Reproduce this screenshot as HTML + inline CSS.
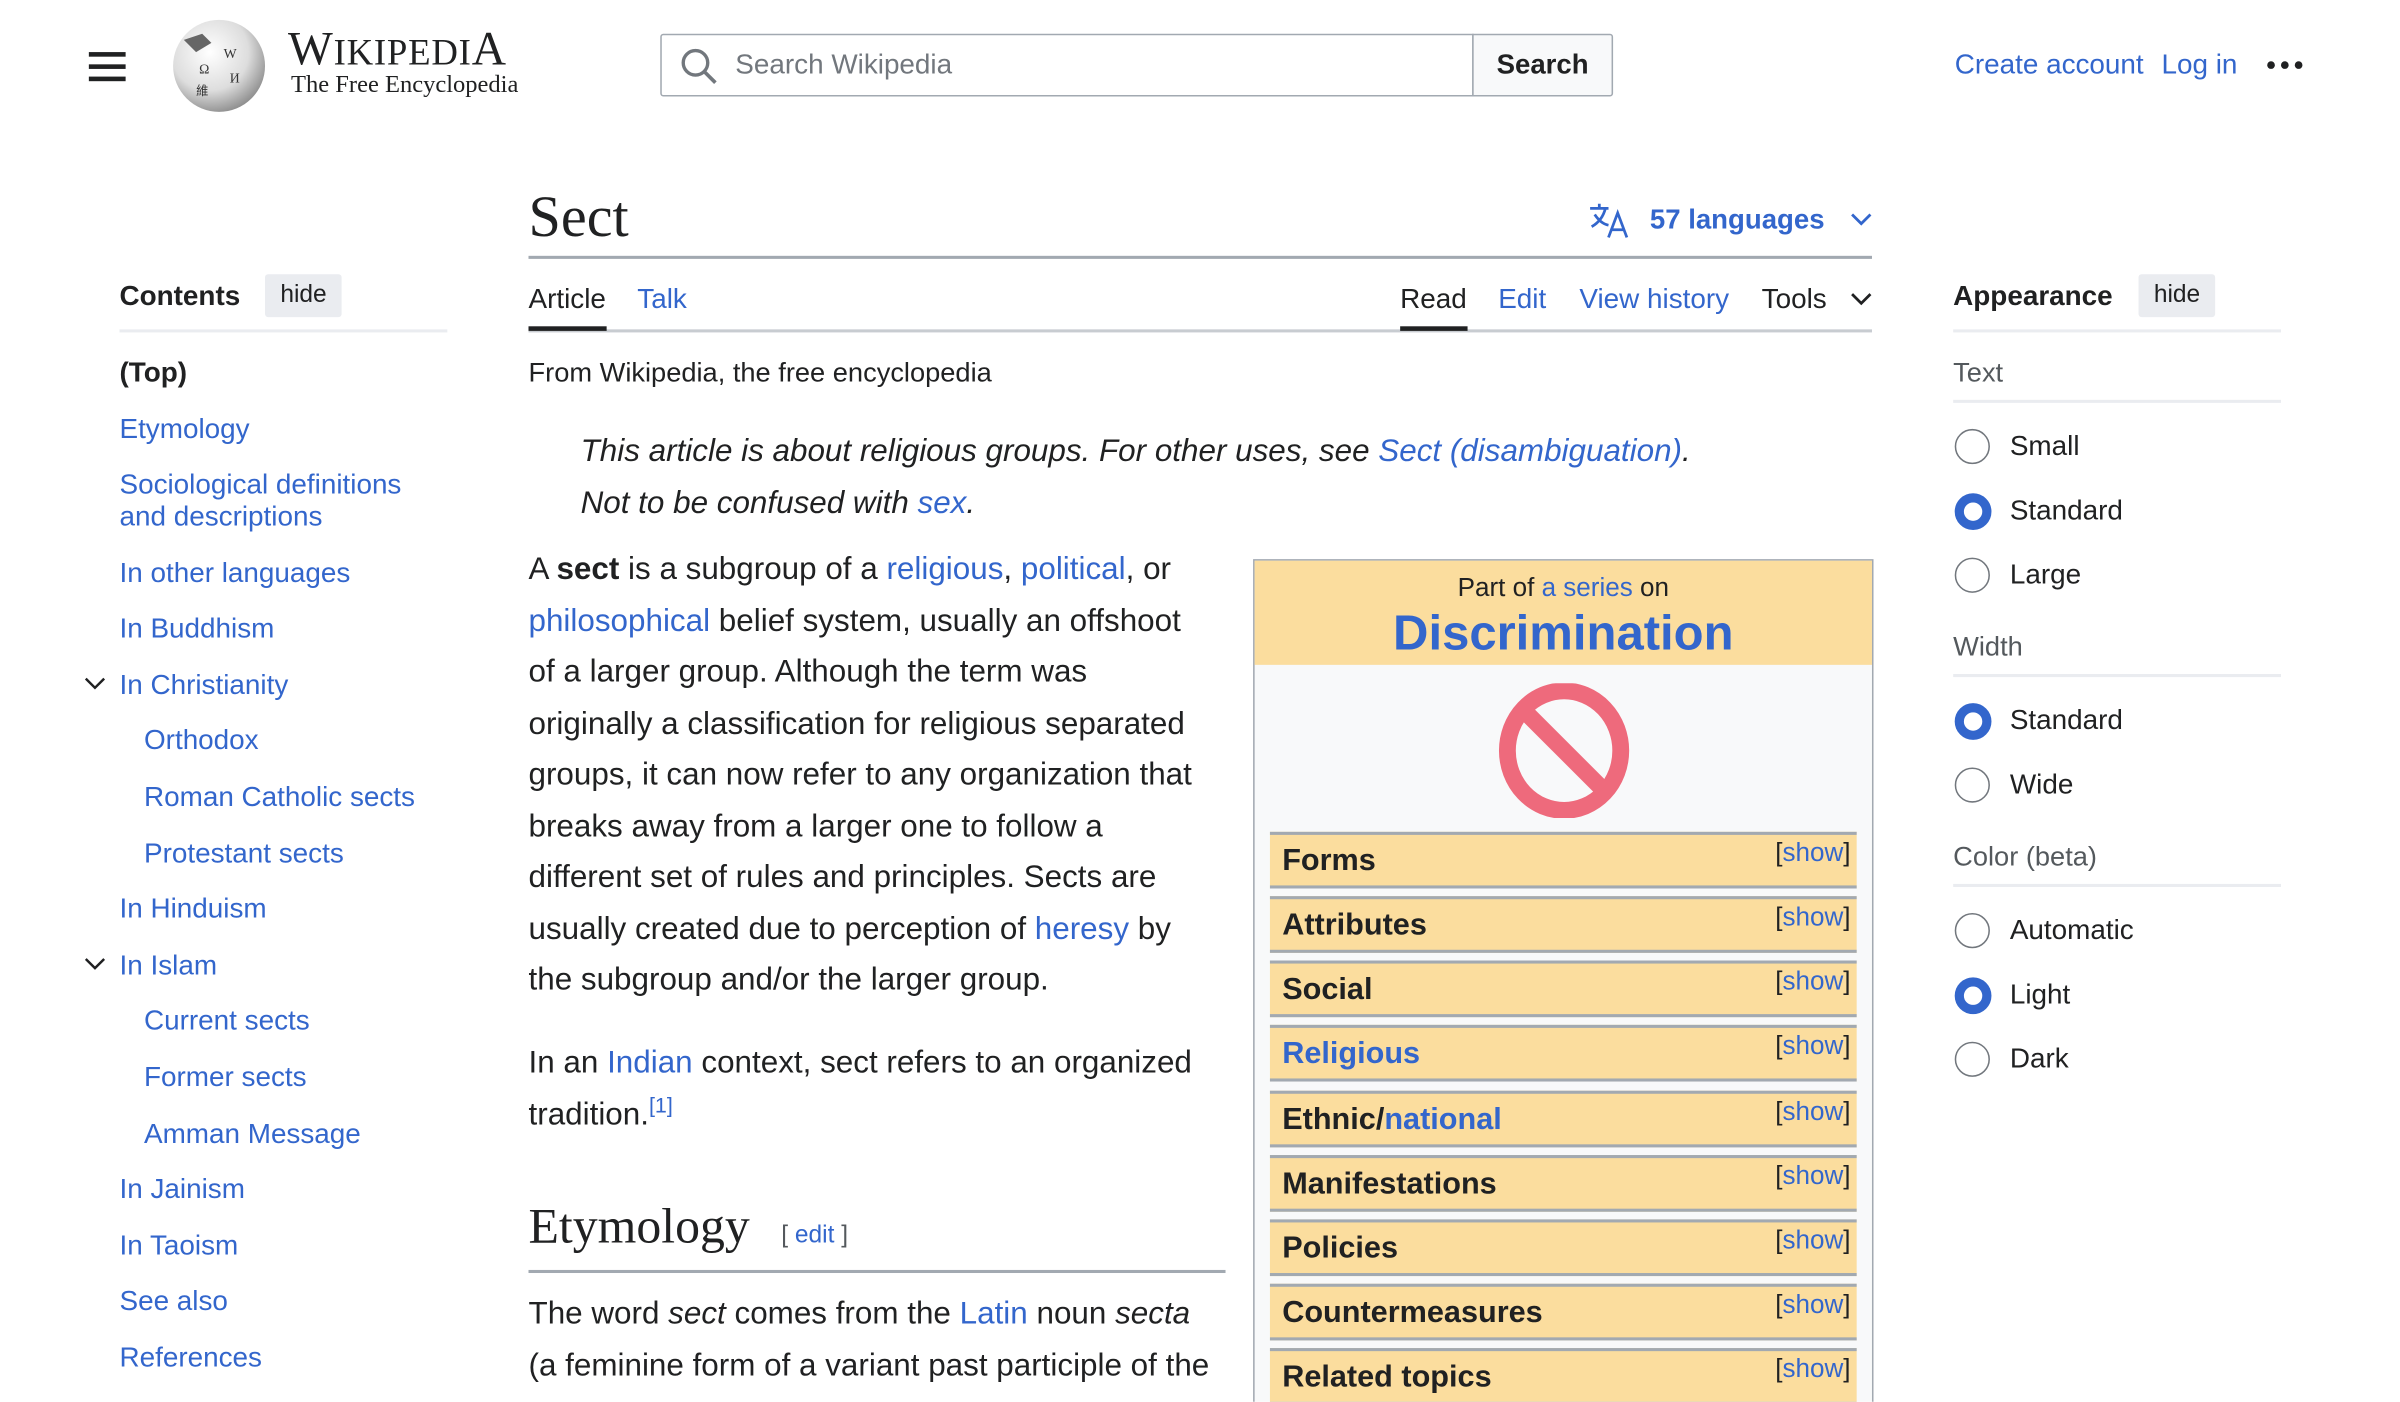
<!DOCTYPE html>
<html><head><meta charset="utf-8">
<style>
html,body{margin:0;padding:0;background:#fff;width:2400px;height:1398px;overflow:hidden;}
#w{position:absolute;left:0;top:0;width:1570px;height:915px;transform:scale(1.5319);transform-origin:0 0;font-family:"Liberation Sans",Arial,sans-serif;color:#202122;overflow:hidden;}
.a{position:absolute;white-space:nowrap;}
a,.l{color:#3366cc;text-decoration:none;}
.serif{font-family:"Liberation Serif","Times New Roman",serif;}
.toc div{position:absolute;left:0;font-size:18.2px;color:#3366cc;white-space:nowrap;}
.p{font-size:20.5px;line-height:33.5px;}
.row{position:absolute;left:10px;width:383px;height:33px;background:#fbdd9e;border-top:2px solid #a2a9b1;border-bottom:2px solid #a2a9b1;}
.row b{position:absolute;left:8px;top:6px;font-size:20px;}
.row span{position:absolute;right:4px;top:2px;font-size:17px;}
.radio{position:absolute;left:0;width:21px;height:21px;border:1.5px solid #72777d;border-radius:50%;}
.radio.on{border:6px solid #3366cc;width:12px;height:12px;background:#fff;}
.rl{position:absolute;left:36px;font-size:18.2px;}
.hidebtn{position:absolute;background:#eaecf0;border-radius:2px;font-size:16px;padding:0 10px;height:28px;line-height:28px;}
</style></head><body><div id="w">
<!-- header -->
<div class="a" style="left:58px;top:34px;width:24px;height:3px;background:#202122;"></div>
<div class="a" style="left:58px;top:42px;width:24px;height:3px;background:#202122;"></div>
<div class="a" style="left:58px;top:50px;width:24px;height:3px;background:#202122;"></div>
<svg class="a" style="left:110px;top:12px" width="66" height="62" viewBox="0 0 66 62">
<defs><radialGradient id="g" cx="40%" cy="35%" r="70%"><stop offset="0" stop-color="#fff"/><stop offset="0.6" stop-color="#ddd"/><stop offset="1" stop-color="#888"/></radialGradient></defs>
<ellipse cx="33" cy="31" rx="30" ry="30" fill="url(#g)"/>
<path d="M10 14 L22 10 L28 16 L18 22 Z" fill="#666"/>
<text x="20" y="36" font-size="9" font-family="Liberation Serif" fill="#333">Ω</text>
<text x="36" y="26" font-size="9" font-family="Liberation Serif" fill="#333">W</text>
<text x="40" y="42" font-size="9" font-family="Liberation Serif" fill="#333">И</text>
<text x="18" y="50" font-size="8" font-family="Noto Sans CJK SC" fill="#333">維</text>
</svg>
<div class="a serif" style="left:188px;top:14px;font-size:31px;letter-spacing:0.5px;">W<span style="font-size:24px">IKIPEDI</span>A</div>
<div class="a serif" style="left:190px;top:47px;font-size:16px;">The Free Encyclopedia</div>
<div class="a" style="left:431px;top:22px;width:529px;height:39px;border:1px solid #a2a9b1;border-radius:2px 0 0 2px;"></div>
<svg class="a" style="left:443px;top:30px" width="26" height="26" viewBox="0 0 26 26"><circle cx="11" cy="11" r="8" fill="none" stroke="#72777d" stroke-width="2.2"/><path d="M17 17 L24 24" stroke="#72777d" stroke-width="2.4"/></svg>
<div class="a" style="left:480px;top:32px;font-size:18.2px;color:#72777d;">Search Wikipedia</div>
<div class="a" style="left:961px;top:22px;width:90px;height:39px;border:1px solid #a2a9b1;background:#f8f9fa;border-radius:0 2px 2px 0;font-weight:bold;font-size:18px;text-align:center;line-height:39px;">Search</div>
<div class="a l" style="left:1276px;top:32px;font-size:18.2px;">Create account</div>
<div class="a l" style="left:1411px;top:32px;font-size:18.2px;">Log in</div>
<div class="a" style="left:1480px;top:40px;width:5px;height:5px;border-radius:50%;background:#202122;box-shadow:9px 0 #202122,18px 0 #202122;"></div>

<!-- title -->
<div class="a serif" style="left:345px;top:120px;font-size:38px;">Sect</div>
<svg class="a" style="left:1037px;top:132px" width="28" height="24" viewBox="0 0 28 24"><g fill="none" stroke="#3366cc" stroke-width="1.8"><path d="M1 4 H13 M7 1 V4 M11 4 Q9 12 2 16 M4 8 Q8 14 13 15"/><path d="M13 23 L19 7 L25 23 M15 18 H23"/></g></svg>
<div class="a l" style="left:1077px;top:133px;font-size:18px;font-weight:bold;">57 languages</div>
<svg class="a" style="left:1208px;top:138px" width="14" height="10"><path d="M1 2 L7 8 L13 2" fill="none" stroke="#3366cc" stroke-width="1.8"/></svg>
<div class="a" style="left:345px;top:167px;width:877px;height:1.5px;background:#a2a9b1;"></div>
<div class="a" style="left:345px;top:185px;font-size:18.2px;">Article</div>
<div class="a l" style="left:416px;top:185px;font-size:18.2px;">Talk</div>
<div class="a" style="left:914px;top:185px;font-size:18.2px;">Read</div>
<div class="a l" style="left:978px;top:185px;font-size:18.2px;">Edit</div>
<div class="a l" style="left:1031px;top:185px;font-size:18.2px;">View history</div>
<div class="a" style="left:1150px;top:185px;font-size:18.2px;">Tools</div>
<svg class="a" style="left:1208px;top:190px" width="14" height="10"><path d="M1 2 L7 8 L13 2" fill="none" stroke="#202122" stroke-width="1.8"/></svg>
<div class="a" style="left:345px;top:215px;width:877px;height:1.5px;background:#c8ccd1;"></div>
<div class="a" style="left:345px;top:213px;width:51px;height:3px;background:#202122;"></div>
<div class="a" style="left:914px;top:213px;width:44px;height:3px;background:#202122;"></div>

<!-- TOC -->
<div class="a" style="left:78px;top:183px;font-size:18.2px;font-weight:bold;">Contents</div>
<div class="hidebtn" style="left:173px;top:179px;">hide</div>
<div class="a" style="left:78px;top:215px;width:214px;height:1.5px;background:#eaecf0;"></div>
<div class="toc a" style="left:78px;top:0;">
<div style="top:233px;color:#202122;font-weight:bold;">(Top)</div>
<div style="top:270px;">Etymology</div>
<div style="top:306px;line-height:21px;">Sociological definitions<br>and descriptions</div>
<div style="top:364px;">In other languages</div>
<div style="top:400px;">In Buddhism</div>
<div style="top:437px;">In Christianity</div>
<div style="top:473px;left:16px;">Orthodox</div>
<div style="top:510px;left:16px;">Roman Catholic sects</div>
<div style="top:547px;left:16px;">Protestant sects</div>
<div style="top:583px;">In Hinduism</div>
<div style="top:620px;">In Islam</div>
<div style="top:656px;left:16px;">Current sects</div>
<div style="top:693px;left:16px;">Former sects</div>
<div style="top:730px;left:16px;">Amman Message</div>
<div style="top:766px;">In Jainism</div>
<div style="top:803px;">In Taoism</div>
<div style="top:839px;">See also</div>
<div style="top:876px;">References</div>
</div>
<svg class="a" style="left:55px;top:441px" width="14" height="10"><path d="M1 2 L7 8 L13 2" fill="none" stroke="#202122" stroke-width="1.6"/></svg>
<svg class="a" style="left:55px;top:624px" width="14" height="10"><path d="M1 2 L7 8 L13 2" fill="none" stroke="#202122" stroke-width="1.6"/></svg>

<!-- content -->
<div class="a" style="left:345px;top:233px;font-size:17.8px;">From Wikipedia, the free encyclopedia</div>
<div class="a p" style="left:379px;top:278px;font-style:italic;">This article is about religious groups. For other uses, see <a>Sect (disambiguation)</a>.<br>Not to be confused with <a>sex</a>.</div>
<div class="a p" style="left:345px;top:355px;">A <b>sect</b> is a subgroup of a <a>religious</a>, <a>political</a>, or<br><a>philosophical</a> belief system, usually an offshoot<br>of a larger group. Although the term was<br>originally a classification for religious separated<br>groups, it can now refer to any organization that<br>breaks away from a larger one to follow a<br>different set of rules and principles. Sects are<br>usually created due to perception of <a>heresy</a> by<br>the subgroup and/or the larger group.</div>
<div class="a p" style="left:345px;top:677px;">In an <a>Indian</a> context, sect refers to an organized<br>tradition.<sup style="font-size:14px;line-height:0;"><a>[1]</a></sup></div>
<div class="a serif" style="left:345px;top:783px;font-size:32.5px;">Etymology</div>
<div class="a" style="left:510px;top:798px;font-size:16px;color:#54595d;">[ <a>edit</a> ]</div>
<div class="a" style="left:345px;top:829px;width:455px;height:1.5px;background:#a2a9b1;"></div>
<div class="a p" style="left:345px;top:841px;">The word <i>sect</i> comes from the <a>Latin</a> noun <i>secta</i><br>(a feminine form of a variant past participle of the</div>

<!-- infobox -->
<div class="a" style="left:818px;top:365px;width:403px;height:560px;border:1px solid #a2a9b1;background:#f8f9fa;">
<div style="position:absolute;left:0;top:0;width:403px;height:68px;background:#fbdd9e;"></div>
<div style="position:absolute;left:0;top:8px;width:403px;text-align:center;font-size:17px;">Part of <a>a series</a> on</div>
<div style="position:absolute;left:0;top:29px;width:403px;text-align:center;font-size:32px;font-weight:bold;color:#3366cc;">Discrimination</div>
<svg style="position:absolute;left:158px;top:80px" width="88" height="88" viewBox="0 0 88 88"><ellipse cx="44" cy="44" rx="37" ry="39" fill="none" stroke="#ee6a7c" stroke-width="11"/><path d="M19 19 L69 69" stroke="#ee6a7c" stroke-width="11"/></svg>
<div class="row" style="top:177px;"><b>Forms</b><span>[<a>show</a>]</span></div>
<div class="row" style="top:219px;"><b>Attributes</b><span>[<a>show</a>]</span></div>
<div class="row" style="top:261px;"><b>Social</b><span>[<a>show</a>]</span></div>
<div class="row" style="top:303px;"><b style="color:#3366cc">Religious</b><span>[<a>show</a>]</span></div>
<div class="row" style="top:346px;"><b>Ethnic/<a>national</a></b><span>[<a>show</a>]</span></div>
<div class="row" style="top:388px;"><b>Manifestations</b><span>[<a>show</a>]</span></div>
<div class="row" style="top:430px;"><b>Policies</b><span>[<a>show</a>]</span></div>
<div class="row" style="top:472px;"><b>Countermeasures</b><span>[<a>show</a>]</span></div>
<div class="row" style="top:514px;"><b>Related topics</b><span>[<a>show</a>]</span></div>
</div>

<!-- appearance -->
<div class="a" style="left:1275px;top:183px;font-size:18.2px;font-weight:bold;">Appearance</div>
<div class="hidebtn" style="left:1396px;top:179px;">hide</div>
<div class="a" style="left:1275px;top:215px;width:214px;height:1.5px;background:#eaecf0;"></div>
<div class="a" style="left:1275px;top:233px;font-size:17.8px;color:#54595d;">Text</div>
<div class="a" style="left:1275px;top:261px;width:214px;height:1.5px;background:#eaecf0;"></div>
<div class="a" style="left:1276px;top:0;">
<div class="radio" style="top:280px;"></div><div class="rl" style="top:281px;">Small</div>
<div class="radio on" style="top:322px;"></div><div class="rl" style="top:323px;">Standard</div>
<div class="radio" style="top:364px;"></div><div class="rl" style="top:365px;">Large</div>
<div class="radio on" style="top:459px;"></div><div class="rl" style="top:460px;">Standard</div>
<div class="radio" style="top:501px;"></div><div class="rl" style="top:502px;">Wide</div>
<div class="radio" style="top:596px;"></div><div class="rl" style="top:597px;">Automatic</div>
<div class="radio on" style="top:638px;"></div><div class="rl" style="top:639px;">Light</div>
<div class="radio" style="top:680px;"></div><div class="rl" style="top:681px;">Dark</div>
</div>
<div class="a" style="left:1275px;top:412px;font-size:17.8px;color:#54595d;">Width</div>
<div class="a" style="left:1275px;top:440px;width:214px;height:1.5px;background:#eaecf0;"></div>
<div class="a" style="left:1275px;top:549px;font-size:17.8px;color:#54595d;">Color (beta)</div>
<div class="a" style="left:1275px;top:577px;width:214px;height:1.5px;background:#eaecf0;"></div>
</div></body></html>
